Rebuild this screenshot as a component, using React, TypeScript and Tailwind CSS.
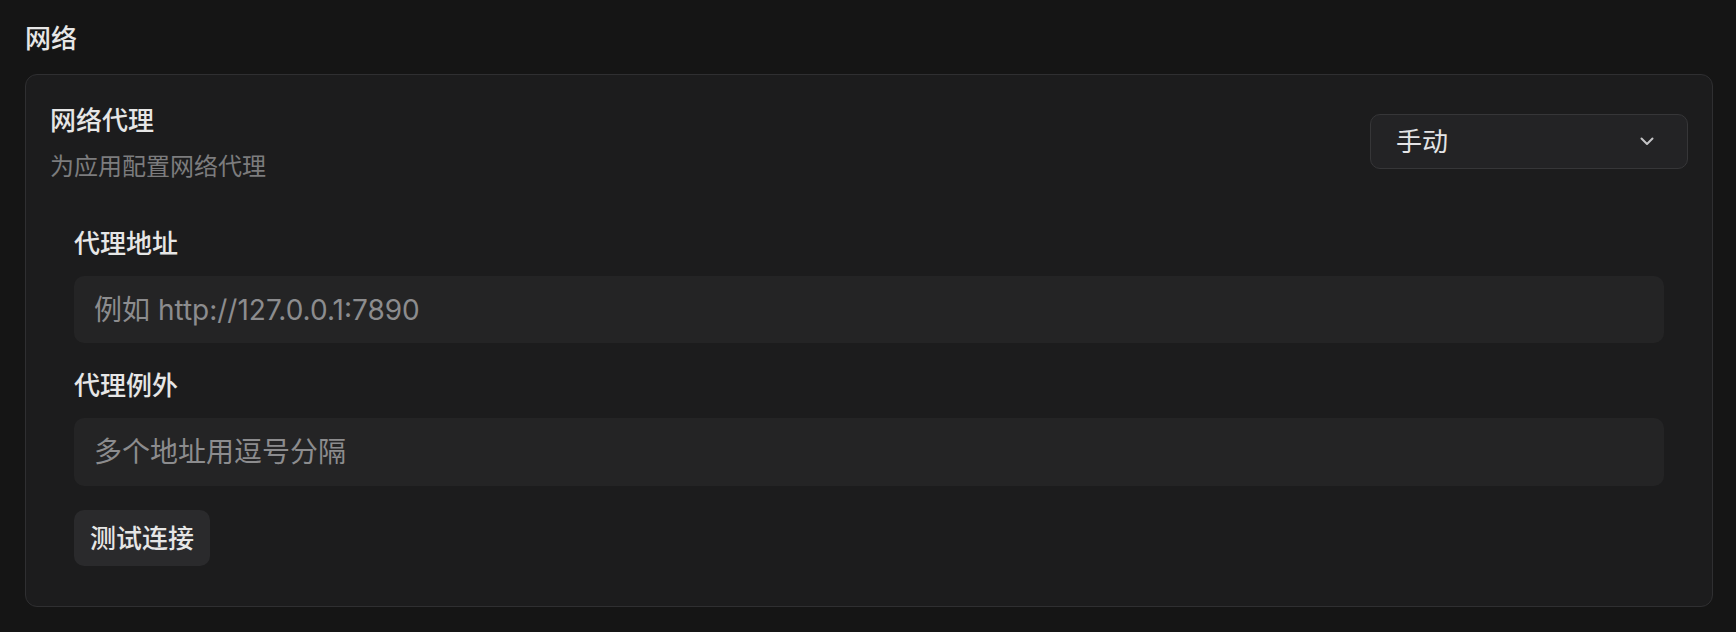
import React from "react";

const font = { fontFamily: '"Inter", "Noto Sans CJK SC", sans-serif' };

function Chevron() {
  return (
    <svg width="14" height="9" viewBox="0 0 14 9" fill="none" className="shrink-0">
      <polyline points="1.5,1.5 7,7 12.5,1.5" stroke="#c4c4c6" strokeWidth="2" strokeLinecap="round" strokeLinejoin="round" />
    </svg>
  );
}

export default function App() {
  return (
    <div
      className="min-h-screen w-full bg-[#151515] pl-[25px] pr-[23px] pt-[21px] pb-6 text-[#e6e6e6] font-['Inter','Noto_Sans_CJK_SC',sans-serif]"
      style={font}
    >
      <h2 className="text-[26px] leading-9 font-medium text-[#e6e6e6]">网络</h2>
      <div className="mt-[17px] rounded-xl border border-[#2f2f31] bg-[#1c1c1d] px-6 pt-7 pb-10">
        <div className="flex items-start justify-between">
          <div>
            <div className="text-[26px] leading-9 font-medium text-[#e6e6e6]">网络代理</div>
            <div className="mt-[10px] text-[24px] leading-9 text-[#7c7c7e]">为应用配置网络代理</div>
          </div>
          <button className="mt-[11px] flex h-[55px] w-[318px] items-center justify-between rounded-[10px] border border-[#363638] bg-[#232325] pl-[25px] pr-[33px] text-[26px] text-[#e4e4e6]">
            <span>手动</span>
            <Chevron />
          </button>
        </div>
        <div className="mt-[41px] px-6">
          <div className="text-[26px] leading-9 font-medium text-[#e6e6e6]">代理地址</div>
          <input
            className="mt-[14px] block h-[67px] w-full rounded-[10px] bg-[#242425] px-5 text-[28px] text-[#e6e6e6] outline-none placeholder:text-[#8c8c8e]"
            placeholder="例如 http://127.0.0.1:7890"
          />
          <div className="mt-[25px] text-[26px] leading-9 font-medium text-[#e6e6e6]">代理例外</div>
          <input
            className="mt-[14px] block h-[68px] w-full rounded-[10px] bg-[#242425] px-5 text-[28px] text-[#e6e6e6] outline-none placeholder:text-[#8c8c8e]"
            placeholder="多个地址用逗号分隔"
          />
          <button className="mt-6 flex h-[56px] items-center rounded-[10px] bg-[#2a2a2c] px-4 text-[26px] font-medium text-[#e6e6e6]">
            测试连接
          </button>
        </div>
      </div>
    </div>
  );
}
